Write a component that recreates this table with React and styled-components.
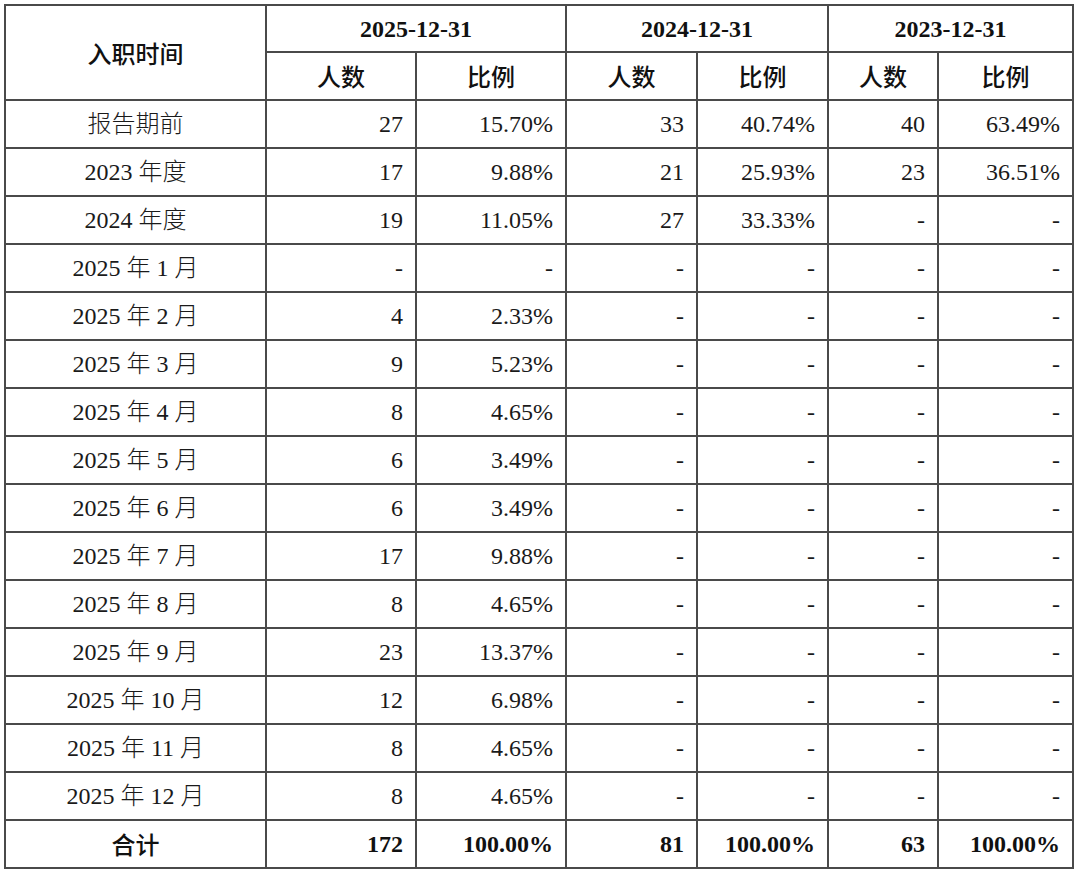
import React from "react";
import styled, { createGlobalStyle } from "styled-components";

const GlobalStyle = createGlobalStyle`
  html, body {
    margin: 0;
    padding: 0;
    background: #ffffff;
  }
  body {
    font-family: "Liberation Serif", "Noto Sans CJK SC", serif;
    color: #1a1a1a;
  }
`;

const periods = [
  { date: "2025-12-31", count: "人数", ratio: "比例" },
  { date: "2024-12-31", count: "人数", ratio: "比例" },
  { date: "2023-12-31", count: "人数", ratio: "比例" },
];

const rows = [
  ["报告期前", "27", "15.70%", "33", "40.74%", "40", "63.49%"],
  ["2023 年度", "17", "9.88%", "21", "25.93%", "23", "36.51%"],
  ["2024 年度", "19", "11.05%", "27", "33.33%", "-", "-"],
  ["2025 年 1 月", "-", "-", "-", "-", "-", "-"],
  ["2025 年 2 月", "4", "2.33%", "-", "-", "-", "-"],
  ["2025 年 3 月", "9", "5.23%", "-", "-", "-", "-"],
  ["2025 年 4 月", "8", "4.65%", "-", "-", "-", "-"],
  ["2025 年 5 月", "6", "3.49%", "-", "-", "-", "-"],
  ["2025 年 6 月", "6", "3.49%", "-", "-", "-", "-"],
  ["2025 年 7 月", "17", "9.88%", "-", "-", "-", "-"],
  ["2025 年 8 月", "8", "4.65%", "-", "-", "-", "-"],
  ["2025 年 9 月", "23", "13.37%", "-", "-", "-", "-"],
  ["2025 年 10 月", "12", "6.98%", "-", "-", "-", "-"],
  ["2025 年 11 月", "8", "4.65%", "-", "-", "-", "-"],
  ["2025 年 12 月", "8", "4.65%", "-", "-", "-", "-"],
];

const total = ["合计", "172", "100.00%", "81", "100.00%", "63", "100.00%"];

const colWidths = [261, 150, 150, 131, 131, 110, 135];

export default function App() {
  return (
    <>
      <GlobalStyle />
      <Page>
        <Table>
          <colgroup>
            {colWidths.map((w, i) => (
              <col key={i} style={{ width: w }} />
            ))}
          </colgroup>
          <thead>
            <HeadRow $top>
              <HeadLabel rowSpan={2}>入职时间</HeadLabel>
              {periods.map((p) => (
                <DateCell key={p.date} colSpan={2}>
                  {p.date}
                </DateCell>
              ))}
            </HeadRow>
            <HeadRow>
              {periods.map((p) => (
                <React.Fragment key={p.date}>
                  <HeadLabel>{p.count}</HeadLabel>
                  <HeadLabel>{p.ratio}</HeadLabel>
                </React.Fragment>
              ))}
            </HeadRow>
          </thead>
          <tbody>
            {rows.map((r) => (
              <BodyRow key={r[0]}>
                <LabelCell>{r[0]}</LabelCell>
                {r.slice(1).map((v, i) => (
                  <NumCell key={i}>{v}</NumCell>
                ))}
              </BodyRow>
            ))}
            <BodyRow>
              <HeadLabel>{total[0]}</HeadLabel>
              {total.slice(1).map((v, i) => (
                <NumCell key={i} $bold>
                  {v}
                </NumCell>
              ))}
            </BodyRow>
          </tbody>
        </Table>
      </Page>
    </>
  );
}

const Page = styled.div`
  padding: 4px 0 0 4px;
`;

const Table = styled.table`
  border-collapse: collapse;
  table-layout: fixed;
  width: 1070px;
  font-size: 24px;
  line-height: 1;

  td,
  th {
    border: 2px solid #4a4a4a;
    padding: 0 12px;
    white-space: nowrap;
  }
`;

const HeadRow = styled.tr`
  height: ${(p) => (p.$top ? "47px" : "48px")};
`;

const BodyRow = styled.tr`
  height: 48px;
`;

const HeadLabel = styled.td`
  text-align: center;
  font-family: "Noto Sans CJK SC", sans-serif;
  font-weight: 500;
  font-size: 24px;
  color: #111;
`;

const DateCell = styled.th`
  text-align: center;
  font-weight: 700;
  color: #111;
`;

const LabelCell = styled.td`
  text-align: center;
  font-weight: 300;
`;

const NumCell = styled.td`
  text-align: right;
  font-weight: ${(p) => (p.$bold ? 700 : 400)};
  color: ${(p) => (p.$bold ? "#111" : "#1a1a1a")};
`;
